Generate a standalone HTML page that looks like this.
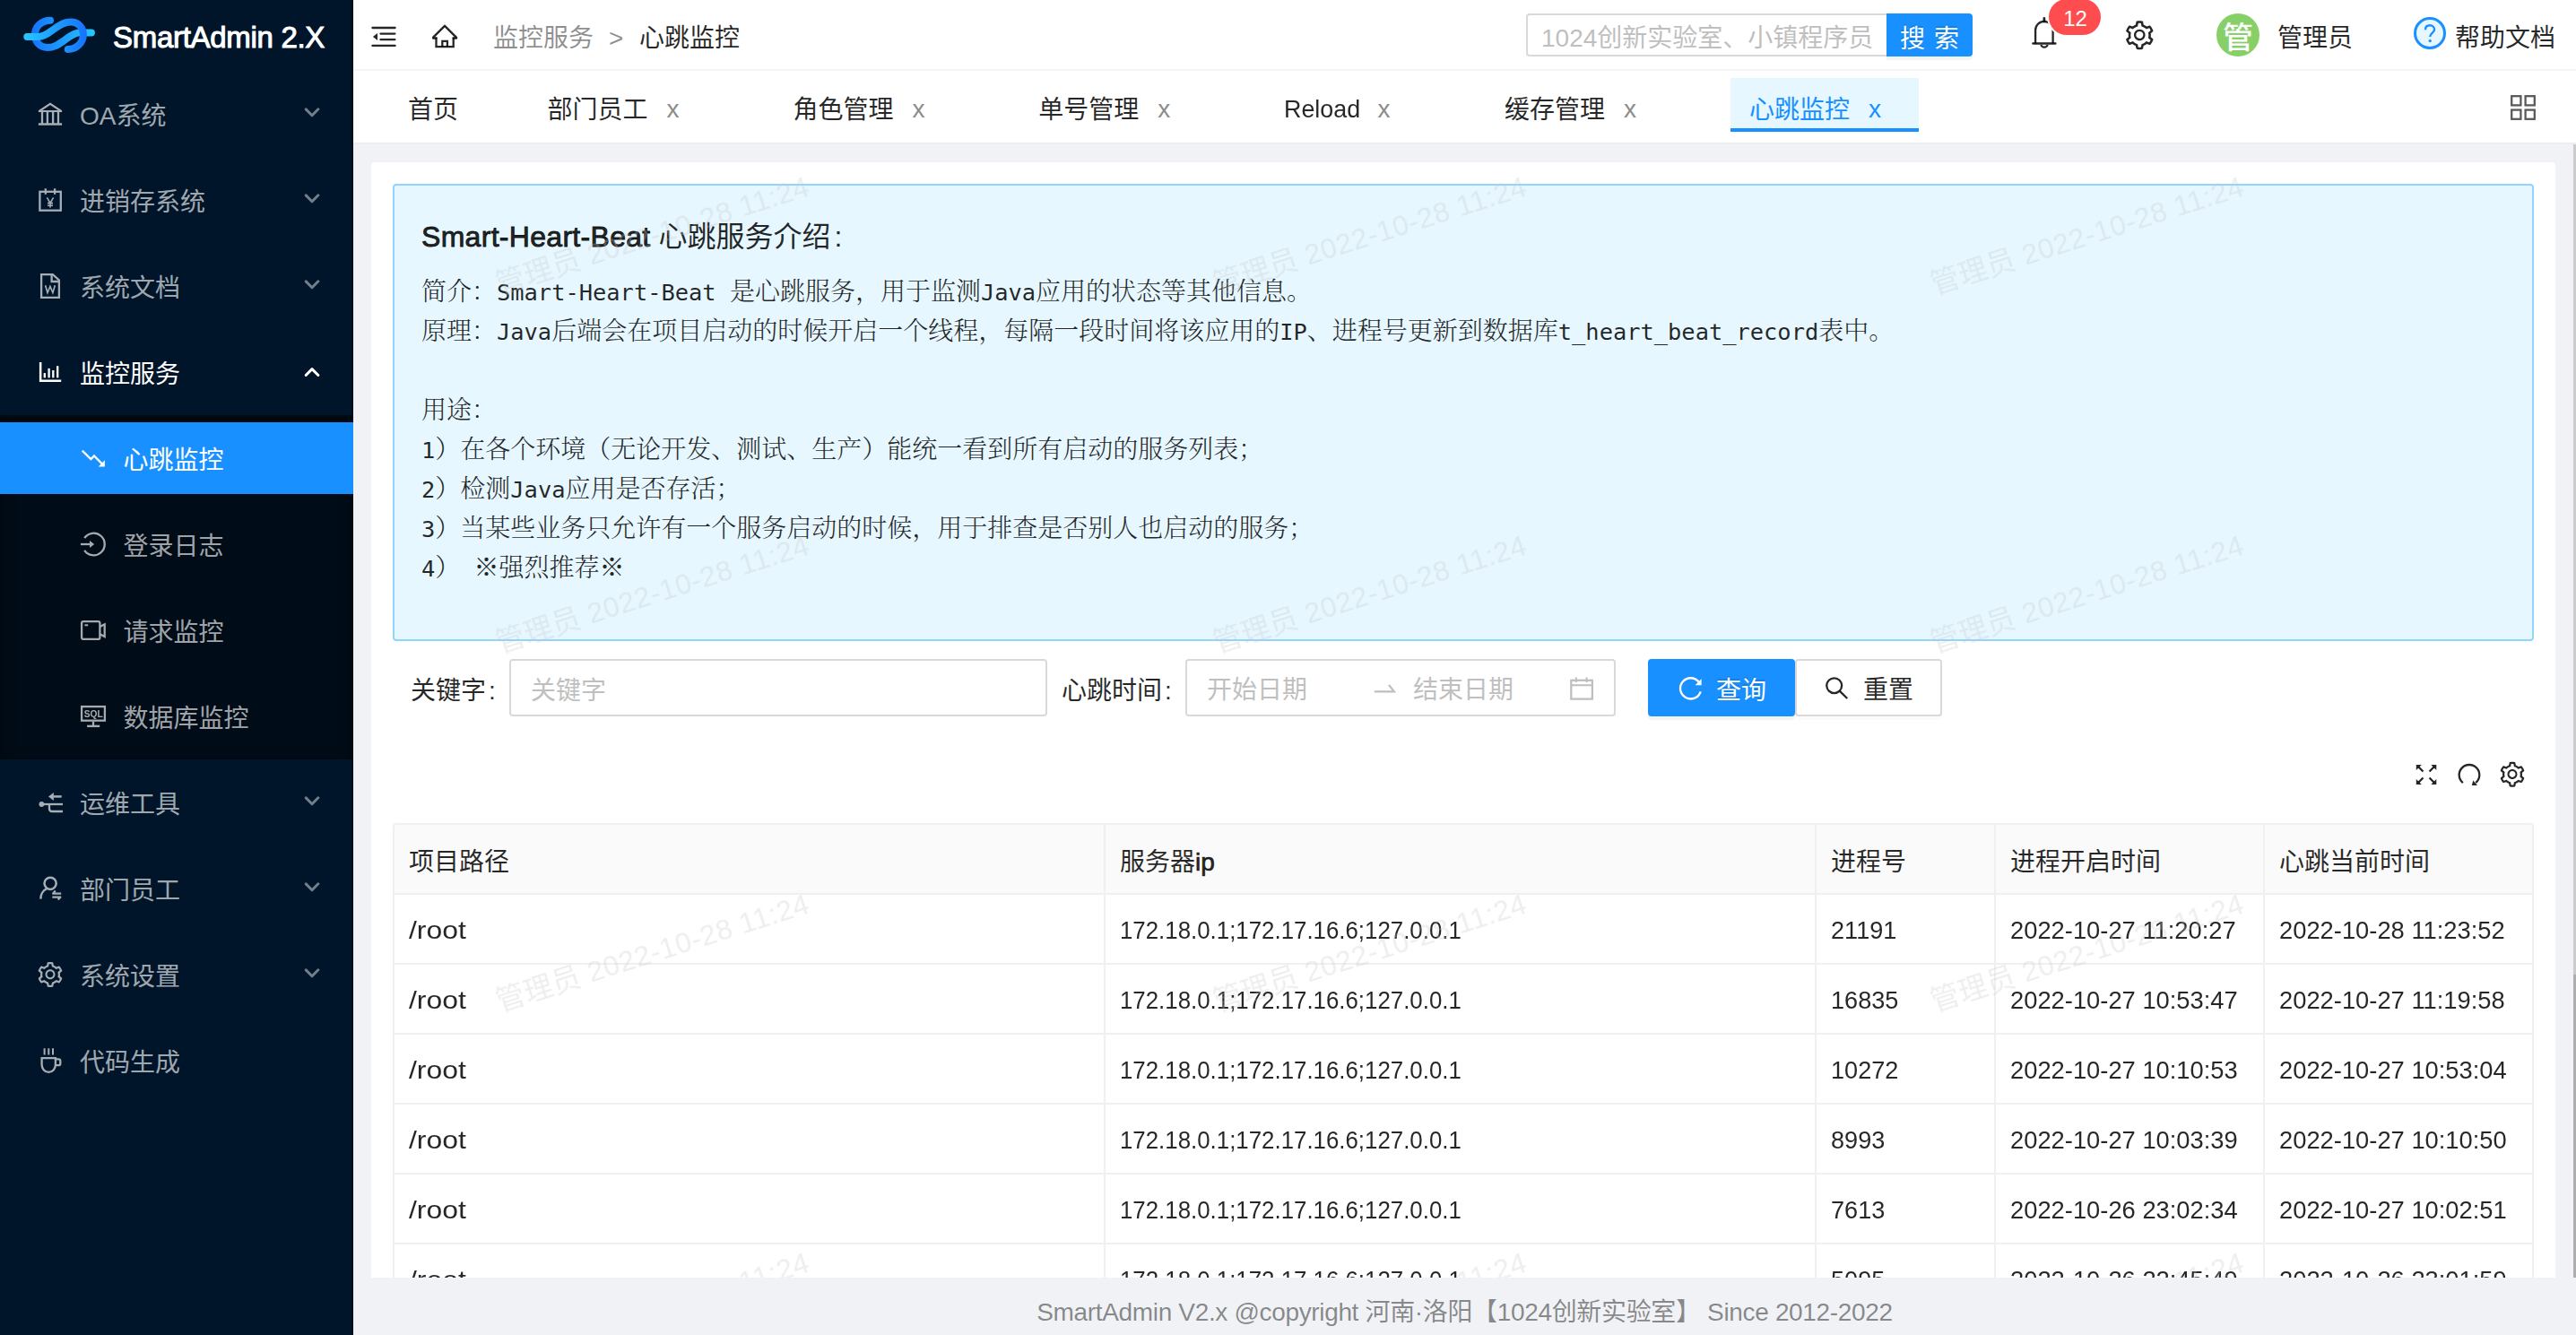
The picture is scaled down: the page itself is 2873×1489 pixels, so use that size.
<!DOCTYPE html>
<html lang="zh-CN">
<head>
<meta charset="utf-8">
<title>SmartAdmin 2.X</title>
<style>
html,body{margin:0;padding:0}
body{width:2873px;height:1489px;overflow:hidden;position:relative;background:#f0f2f5;font-family:"Liberation Sans","Noto Sans CJK SC",sans-serif;font-size:28px;color:rgba(0,0,0,.85);}
*{box-sizing:border-box}
.abs{position:absolute}
svg{display:block;overflow:visible}
/* ---------- sidebar ---------- */
#side{position:absolute;left:0;top:0;width:394px;height:1489px;background:#001529;overflow:hidden;box-shadow:inset -1.5px 0 0 #000b18}
#brand{position:absolute;left:126px;top:17px;height:50px;line-height:50px;font-size:33px;font-weight:400;-webkit-text-stroke:1px #fff;color:#fff;white-space:nowrap;letter-spacing:-.3px}
#subbg{position:absolute;left:0;top:463px;width:394px;height:384px;background:#000c17;box-shadow:inset 0 4px 16px rgba(0,0,0,.45)}
.mi{position:absolute;left:0;width:394px;height:80px;line-height:80px;color:rgba(255,255,255,.65);white-space:nowrap}
.mi .ic{position:absolute;left:42px;top:26px;width:28px;height:28px;color:#fff;opacity:.65}
.mi.on .ic,.mi.sel .ic{opacity:1}
.mi .tx{position:absolute;left:89px;top:3px}
.mi.sub .ic{left:90px}
.mi.sub .tx{left:137.500px}
.mi.on{color:#fff}
.mi.sel{background:#1890ff;color:#fff}
.mi .ar{position:absolute;left:334px;top:25px;width:28px;height:28px}
.st{fill:none;stroke:currentColor;stroke-width:2.3;stroke-linecap:butt;stroke-linejoin:miter}
/* ---------- header ---------- */
#head{position:absolute;left:394px;top:0;width:2479px;height:79px;background:#fff;border-bottom:2px solid #f5f5f5}
#tabs{position:absolute;left:394px;top:79px;width:2479px;height:82px;background:#fff;border-bottom:2px solid #ededed}
.tab{position:absolute;top:4px;height:80px;line-height:80px;white-space:nowrap}
.tab .x{color:#8c8c8c;top:-1px}
.bc{position:absolute;top:3.500px;height:78px;line-height:78px;white-space:nowrap}
/* ---------- main ---------- */
#card{position:absolute;left:414px;top:181px;width:2436px;height:1244px;background:#fff;border-radius:4px 4px 0 0;overflow:hidden}
#alert{position:absolute;left:24px;top:24px;width:2388px;height:510px;background:#e6f7ff;border:2px solid #91d5ff;border-radius:4px}
#alert h4{position:absolute;left:30px;top:32px;margin:0;font-size:32px;line-height:50px;font-weight:400;white-space:nowrap}
.sb{font-weight:400;-webkit-text-stroke:.9px currentColor}
#alert pre{position:absolute;left:30px;top:98.8px;margin:0;font-family:"Liberation Mono","Noto Serif CJK SC",monospace;font-weight:300;font-size:28px;line-height:44px;white-space:pre}
#alert pre span{font-family:"DejaVu Sans Mono","Liberation Mono",monospace;font-size:25.4px;line-height:0;font-weight:400}
.lbl{position:absolute;top:558px;height:64px;line-height:64px;white-space:nowrap}
.inp{position:absolute;top:554px;height:64px;border:2px solid #d9d9d9;border-radius:4px;background:#fff;line-height:60px;color:#bfbfbf;white-space:nowrap}
.btn{position:absolute;top:554px;height:64px;line-height:60px;border-radius:4px;white-space:nowrap}
/* table */
#tbl{position:absolute;left:24px;top:737px;width:2388px;border-left:2px solid #f0f0f0;border-top:2px solid #f0f0f0;border-radius:4px 4px 0 0}
.tr{position:relative;height:78px;width:2386px}
.tr>div{position:absolute;top:0;height:78px;border-right:2px solid #f0f0f0;border-bottom:2px solid #f0f0f0;padding-left:16px;padding-top:4px;line-height:72px;white-space:nowrap;overflow:hidden}
.th>div{background:#fafafa;padding-top:7px;line-height:69px}
.s{display:inline-block;transform-origin:0 50%}
.k1{transform:scaleX(1.14)}.k2{transform:scaleX(.923)}.k3{transform:scaleX(.968)}.k4{transform:scaleX(.976)}
.c1{left:0;width:793px}.c2{left:793px;width:793px}.c3{left:1586px;width:200px}.c4{left:1786px;width:300px}.c5{left:2086px;width:300px}
.wm{position:absolute;font-size:32px;line-height:32px;color:rgba(200,200,200,.3);white-space:nowrap;transform-origin:0 100%;transform:rotate(-17.700deg);letter-spacing:.47px;pointer-events:none;filter:blur(.5px)}
#foot{position:absolute;left:394px;top:1425px;width:2479px;height:64px;line-height:77px;text-align:center;color:rgba(0,0,0,.45);white-space:nowrap;letter-spacing:-.34px}
</style>
</head>
<body>
<svg width="0" height="0" style="position:absolute"><defs><path id="gear" fill="currentColor" d="M924.8 625.7l-65.5-56c3.1-19 4.7-38.400 4.7-57.800s-1.600-38.800-4.700-57.800l65.500-56a32.030 32.030 0 009.300-35.200l-.9-2.600a442.090 442.090 0 00-79.700-137.900l-1.800-2.100a32.120 32.120 0 00-35.100-9.500l-81.300 28.900c-30-24.600-63.500-44-99.700-57.600l-15.700-85a32.050 32.050 0 00-25.800-25.700l-2.700-.5c-52.100-9.400-106.900-9.400-159 0l-2.700.5a32.050 32.050 0 00-25.800 25.700l-15.800 85.400a351.860 351.860 0 00-99 57.400l-81.900-29.100a32 32 0 00-35.100 9.500l-1.800 2.100a446.020 446.020 0 00-79.700 137.900l-.9 2.600c-4.500 12.500-.8 26.500 9.300 35.200l66.300 56.600c-3.100 18.800-4.600 38-4.600 57.100 0 19.200 1.500 38.400 4.600 57.100L99 625.500a32.030 32.030 0 00-9.300 35.200l.9 2.600c18.100 50.400 44.900 96.900 79.700 137.900l1.800 2.100a32.120 32.120 0 0035.100 9.500l81.900-29.100c29.800 24.500 63.100 43.900 99 57.400l15.800 85.400a32.050 32.050 0 0025.800 25.700l2.700.5a449.400 449.400 0 00159 0l2.700-.5a32.050 32.050 0 0025.800-25.700l15.700-85a350 350 0 0099.700-57.600l81.300 28.900a32 32 0 0035.100-9.500l1.800-2.100c34.800-41.100 61.600-87.500 79.700-137.900l.9-2.600c4.500-12.300.8-26.300-9.300-35zM788.300 465.900c2.500 15.100 3.800 30.600 3.800 46.100s-1.300 31-3.800 46.100l-6.600 40.100 74.700 63.900a370.030 370.030 0 01-42.600 73.600L721 702.800l-31.400 25.800c-23.900 19.600-50.500 35-79.300 45.800l-38.100 14.300-17.900 97a377.500 377.500 0 01-85 0l-17.900-97.200-37.800-14.500c-28.500-10.800-55-26.200-78.700-45.700l-31.400-25.900-93.400 33.200c-17-22.900-31.200-47.600-42.600-73.600l75.500-64.500-6.500-40c-2.400-14.900-3.700-30.300-3.700-45.500 0-15.300 1.200-30.600 3.700-45.500l6.500-40-75.500-64.500c11.300-26.100 25.600-50.700 42.600-73.600l93.400 33.200 31.400-25.900c23.700-19.500 50.200-34.900 78.700-45.700l37.900-14.300 17.900-97.200c28.100-3.200 56.800-3.200 85 0l17.900 97 38.100 14.300c28.700 10.800 55.400 26.200 79.300 45.800l31.400 25.800 92.800-32.900c17 22.900 31.200 47.600 42.600 73.600L781.800 426l6.500 39.900zM512 326c-97.200 0-176 78.800-176 176s78.800 176 176 176 176-78.800 176-176-78.800-176-176-176zm79.200 255.200A111.600 111.600 0 01512 614c-29.900 0-58-11.700-79.200-32.800A111.600 111.600 0 01400 502c0-29.900 11.700-58 32.800-79.200C454 401.600 482.100 390 512 390c29.900 0 58 11.600 79.200 32.800A111.600 111.600 0 01624 502c0 29.900-11.700 58-32.800 79.200z"/></defs></svg>
<!-- SIDEBAR -->
<div id="side">
<svg class="abs" style="left:0;top:0" width="130" height="79" viewBox="0 0 130 79">
<defs>
<linearGradient id="lg1" gradientUnits="userSpaceOnUse" x1="28" y1="0" x2="96" y2="0"><stop offset="0" stop-color="#25c6ff"/><stop offset="1" stop-color="#1673ff"/></linearGradient>
<linearGradient id="lg2" gradientUnits="userSpaceOnUse" x1="36" y1="0" x2="104" y2="0"><stop offset="0" stop-color="#1673ff"/><stop offset="1" stop-color="#25c6ff"/></linearGradient>
</defs>
<path d="M101.9 36.6 L88.8 36.6 C81.8 36.6 76.8 41.6 70.9 45.6 C63.8 50.4 59.8 53 52.9 53 C44.3 53 38.9 46.6 38.9 38.8 C38.9 30.1 46.3 22.7 56 22.7" fill="none" stroke="url(#lg2)" stroke-width="8" stroke-linecap="round"/>
<path d="M30.3 41 L43 41 C50 41 55 36 60.9 32 C68 27.2 72 24.6 78.9 24.6 C87.5 24.6 92.9 31 92.9 38.8 C92.9 47.5 85.5 54.9 75.8 54.9" fill="none" stroke="url(#lg1)" stroke-width="8" stroke-linecap="round"/>
</svg>
<div id="brand">SmartAdmin 2.X</div>
<div id="subbg"></div>
<div class="mi" style="top:87px"><svg class="ic" viewBox="0 0 28 28"><clipPath id="cpb"><rect x="0.9" y="0" width="26.2" height="12.3"/></clipPath><g class="st" stroke-width="2.1"><g clip-path="url(#cpb)"><path d="M-2 13.36 L14 2.86 L30 13.36M0 11.2H28"/></g><path d="M5 11.5V24.6M10.9 11.5V24.6M17.1 11.5V24.6M23 11.5V24.6M0.9 25.5H27.1"/></g></svg><span class="tx">OA系统</span><svg class="ar" viewBox="0 0 28 28"><path d="M7.2 9.9 L14 16.8 L20.9 9.8" fill="none" stroke="rgba(255,255,255,.45)" stroke-width="3" stroke-linecap="round" stroke-linejoin="round"/></svg></div>
<div class="mi" style="top:183px"><svg class="ic" viewBox="0 0 28 28"><g class="st"><rect x="2.4" y="4.8" width="23.4" height="20.9"/><path d="M8.8 1.3V7.8M19.1 1.3V7.8"/><path d="M10.4 11.3 L14 17.4 L17.6 11.3 M14 17.4V22.6 M11 17.6H17 M11 20.2H17" stroke-width="1.6"/></g></svg><span class="tx">进销存系统</span><svg class="ar" viewBox="0 0 28 28"><path d="M7.2 9.9 L14 16.8 L20.9 9.8" fill="none" stroke="rgba(255,255,255,.45)" stroke-width="3" stroke-linecap="round" stroke-linejoin="round"/></svg></div>
<div class="mi" style="top:279px"><svg class="ic" viewBox="0 0 28 28"><g class="st"><path d="M4.1 1.1H16.8L23.9 7.4V26.9H4.1Z"/><path d="M15.6 1.1V9H23.9"/><path d="M8.6 13.3 L11 21.5 L13.95 14.5 L16.9 21.5 L19.3 13.3" stroke-width="1.7"/></g></svg><span class="tx">系统文档</span><svg class="ar" viewBox="0 0 28 28"><path d="M7.2 9.9 L14 16.8 L20.9 9.8" fill="none" stroke="rgba(255,255,255,.45)" stroke-width="3" stroke-linecap="round" stroke-linejoin="round"/></svg></div>
<div class="mi on" style="top:375px"><svg class="ic" viewBox="0 0 28 28"><g fill="currentColor"><path d="M1.9 3H4.4V22.5H26.2V25H1.9Z"/><rect x="6.65" y="15.1" width="2.3" height="5.2"/><rect x="11.45" y="9.9" width="2.3" height="10.4"/><rect x="16.15" y="12" width="2.3" height="8.3"/><rect x="21.05" y="7.2" width="2.3" height="13.1"/></g></svg><span class="tx">监控服务</span><svg class="ar" viewBox="0 0 28 28"><path d="M7.2 18.5 L14 11.6 L20.9 18.5" fill="none" stroke="#fff" stroke-width="3" stroke-linecap="round" stroke-linejoin="round"/></svg></div>
<div class="mi sub sel" style="top:471px"><svg class="ic" viewBox="0 0 28 28"><path class="st" d="M1.7 5.7 L11.4 15.1 L15 11.5 L24 20.5" stroke-width="2.7"/><path d="M26.9 16.2V23.4H19.7Z" fill="currentColor"/></svg><span class="tx">心跳监控</span></div>
<div class="mi sub" style="top:567px"><svg class="ic" viewBox="0 0 28 28"><path class="st" d="M4.2 7.2 A12.3 12.3 0 1 1 4.2 20.8"/><path class="st" d="M-0.1 14H11" stroke-width="2.2"/><path d="M10 10.1V18L15.2 14Z" fill="currentColor"/></svg><span class="tx">登录日志</span></div>
<div class="mi sub" style="top:663px"><svg class="ic" viewBox="0 0 28 28"><g class="st"><rect x="1.1" y="4.1" width="20.3" height="19.8" rx="2"/><path d="M21.4 10 L26.7 7.3 V21 L21.4 18.3"/><path d="M4.4 8.3H8.2" stroke-width="2"/></g></svg><span class="tx">请求监控</span></div>
<div class="mi sub" style="top:759px"><svg class="ic" viewBox="0 0 28 28"><g class="st"><rect x="1.1" y="3.1" width="25.8" height="15.6"/><path d="M14 19.8V24"/><path d="M7.1 24.9H21.2" stroke-width="2.4"/></g><text x="14.2" y="14.8" text-anchor="middle" font-family="Liberation Sans,sans-serif" font-size="10.2" font-weight="700" fill="currentColor">SQL</text></svg><span class="tx">数据库监控</span></div>
<div class="mi" style="top:855px"><svg class="ic" viewBox="0 0 28 28"><path d="M12 7.4 L17.9 3 V12Z" fill="currentColor"/><circle cx="4.4" cy="16" r="2.9" fill="currentColor"/><g class="st"><path d="M17.5 7.4H26.7" stroke-width="2.5"/><path d="M4.4 16H28"/><path d="M13 16V21Q13 24 16 24H28"/></g></svg><span class="tx">运维工具</span><svg class="ar" viewBox="0 0 28 28"><path d="M7.2 9.9 L14 16.8 L20.9 9.8" fill="none" stroke="rgba(255,255,255,.45)" stroke-width="3" stroke-linecap="round" stroke-linejoin="round"/></svg></div>
<div class="mi" style="top:951px"><svg class="ic" viewBox="0 0 28 28"><g class="st"><circle cx="14.1" cy="8.3" r="6.6" stroke-width="2.5"/><path d="M3.5 25.6 A11.5 11.5 0 0 1 10.3 14.2" stroke-width="2.5"/><path d="M16.3 19.6H26.2M16.6 19.9L19.8 16.6M16.3 23.6H26.2M25.9 23.3L22.7 26.6" stroke-width="2.2"/></g></svg><span class="tx">部门员工</span><svg class="ar" viewBox="0 0 28 28"><path d="M7.2 9.9 L14 16.8 L20.9 9.8" fill="none" stroke="rgba(255,255,255,.45)" stroke-width="3" stroke-linecap="round" stroke-linejoin="round"/></svg></div>
<div class="mi" style="top:1047px"><svg class="ic" style="left:40px;top:24px;width:32px;height:32px" viewBox="0 0 1024 1024"><use href="#gear"/></svg><span class="tx">系统设置</span><svg class="ar" viewBox="0 0 28 28"><path d="M7.2 9.9 L14 16.8 L20.9 9.8" fill="none" stroke="rgba(255,255,255,.45)" stroke-width="3" stroke-linecap="round" stroke-linejoin="round"/></svg></div>
<div class="mi" style="top:1143px"><svg class="ic" viewBox="0 0 28 28"><g class="st" stroke-width="2.1"><path d="M4.6 11.1H19.9V18.5A7.65 8.4 0 0 1 4.6 18.5Z"/><path d="M19.9 12.4H23.3Q25.3 12.4 25.3 14.4V17.2Q25.3 19.2 23.3 19.2H19.9"/><path d="M7.6 0.3V7.5M12.3 0.3V7.5M17 0.3V7.5" stroke-width="2"/></g></svg><span class="tx">代码生成</span></div>

</div>
<!-- HEADER -->
<div id="head">
<svg class="abs" style="left:0;top:1px;color:rgba(0,0,0,.85)" width="140" height="78" viewBox="394 0 140 78"><g class="st" stroke-width="2.2"><path d="M415.4 30H440.6M424.5 36.6H440.4M424.5 43.2H440.4M415.4 49.9H440.6" stroke-linecap="round"/><path d="M496 27.8 L483.4 40.4 M496 27.8 L508.6 40.4" stroke-linecap="round" stroke-width="2.4"/><path d="M486.5 40.6V51.1H505.7V40.6"/><path d="M483 41.6H486.5M505.7 41.6H509.2" stroke-linecap="round"/><path d="M493.3 51.1V44.9H498.9V51.1"/></g><path d="M415.9 40 L421 36 V44Z" fill="currentColor"/></svg>
<div class="bc" style="left:156px;color:rgba(0,0,0,.45)">监控服务</div>
<div class="bc" style="left:285px;color:rgba(0,0,0,.45)">&gt;</div>
<div class="bc" style="left:319px">心跳监控</div>
<div class="abs" style="left:1308px;top:15px;width:404px;height:48px;border:2px solid #d9d9d9;border-right:0;border-radius:4px 0 0 4px;line-height:51px;padding-left:15px;color:#bfbfbf;white-space:nowrap;overflow:hidden">1024创新实验室、小镇程序员</div>
<div class="abs" style="left:1710px;top:15px;width:96px;height:48px;background:#1890ff;border-radius:0 4px 4px 0;line-height:57px;color:#fff;text-align:center;white-space:nowrap;overflow:visible;word-spacing:2px;box-shadow:0 4px 0 rgba(0,0,0,.045);text-shadow:0 -2px 0 rgba(0,0,0,.12)">搜 索</div>
<svg class="abs" style="left:1860px;top:0;color:rgba(0,0,0,.85)" width="60" height="78" viewBox="2254 0 60 78"><g class="st" stroke-width="2.5"><path d="M2267.3 48.5H2292.5" stroke-linecap="round"/><path d="M2270.1 48.5V33.6A9.75 9.75 0 0 1 2289.6 33.600V48.5"/><path d="M2276.3 50A3.9 3.9 0 0 0 2283.700 50" stroke-width="2.2"/><path d="M2279.9 20.5V24" stroke-linecap="round" stroke-width="2.8"/></g></svg>
<div class="abs" style="left:1891px;top:-1px;width:58px;height:40px;border-radius:20px;background:#ff4d4f;box-shadow:0 0 0 2px #fff;color:#fff;font-size:24px;line-height:44px;text-align:center;text-indent:1px">12</div>
<svg class="abs" style="left:1973.7px;top:20.6px;color:rgba(0,0,0,.85)" width="36.6" height="36.6" viewBox="0 0 1024 1024"><use href="#gear"/></svg>
<div class="abs" style="left:2078px;top:15px;width:48px;height:48px;border-radius:24px;background:#87d068;color:#fff;font-size:34px;font-weight:500;line-height:54px;text-align:center">管</div>
<div class="bc" style="left:2146px">管理员</div>
<svg class="abs" style="left:2298px;top:19px" width="36" height="36" viewBox="0 0 36 36"><circle cx="18" cy="18" r="16.5" fill="#e6f7ff" stroke="#1890ff" stroke-width="3"/><path d="M13 14.200C13 11 15.200 9.300 18 9.300C20.800 9.300 23.100 11.100 23.100 13.900C23.100 17.400 18.200 17.800 18.200 22" fill="none" stroke="#1890ff" stroke-width="2.400"/><circle cx="18.200" cy="26.600" r="1.700" fill="#1890ff"/></svg>
<div class="bc" style="left:2344px">帮助文档</div>

</div>
<div id="tabs">
<div class="tab" style="left:61px">首页</div>
<div class="tab" style="left:216.500px">部门员工<span class="x abs" style="left:133px">x</span></div>
<div class="tab" style="left:490.600px">角色管理<span class="x abs" style="left:133px">x</span></div>
<div class="tab" style="left:764.200px">单号管理<span class="x abs" style="left:133px">x</span></div>
<div class="tab" style="left:1037.600px;top:3px"><span class="s" style="transform:scaleX(.96)">Reload</span><span class="x abs" style="left:105px;top:0">x</span></div>
<div class="abs" style="left:1536px;top:8px;width:210px;height:60px;background:#e6f7ff;border-bottom:4px solid #1890ff"></div>
<div class="tab" style="left:1284px">缓存管理<span class="x abs" style="left:133px">x</span></div>
<div class="tab" style="left:1557px;color:#1890ff">心跳监控<span class="x abs" style="left:133px;color:#1890ff">x</span></div>
<svg class="abs" style="left:2406px;top:27px;color:rgba(0,0,0,.65)" width="28" height="28" viewBox="0 0 28 28"><g class="st" stroke-width="2.4"><rect x="1.2" y="1.2" width="10.2" height="10.2"/><rect x="16.6" y="1.2" width="10.2" height="10.2"/><rect x="1.2" y="16.6" width="10.2" height="10.2"/><rect x="16.6" y="16.6" width="10.2" height="10.2"/></g></svg>

</div>
<!-- MAIN -->
<div id="card">
<div id="alert">
<h4><span class="sb" style="letter-spacing:.3px">Smart-Heart-Beat</span> 心跳服务介绍<span style="margin-left:4px">:</span></h4>
<pre>简介：<span>Smart-Heart-Beat </span>是心跳服务，用于监测<span>Java</span>应用的状态等其他信息。
原理：<span>Java</span>后端会在项目启动的时候开启一个线程，每隔一段时间将该应用的<span>IP</span>、进程号更新到数据库<span>t_heart_beat_record</span>表中。

用途：
<span>1</span>）在各个环境（无论开发、测试、生产）能统一看到所有启动的服务列表；
<span>2</span>）检测<span>Java</span>应用是否存活；
<span>3</span>）当某些业务只允许有一个服务启动的时候，用于排查是否别人也启动的服务；
<span>4</span>）<span> </span>※强烈推荐※</pre>
</div>
<div class="lbl" style="left:44px">关键字<span style="margin-left:3px">:</span></div>
<div class="inp" style="left:154px;width:600px;padding-left:22px;padding-top:4px">关键字</div>
<div class="lbl" style="left:770px">心跳时间<span style="margin-left:3px">:</span></div>
<div class="inp" style="left:908px;width:480px"><span class="abs" style="left:22px;top:3px">开始日期</span><span class="abs" style="left:252px;top:3px">结束日期</span>
<svg class="abs" style="left:208px;top:14px;color:#bfbfbf" width="28" height="28" viewBox="0 0 28 28"><path class="st" d="M0.800 20.300H22.800L17 12.900" stroke-width="2"/></svg>
<svg class="abs" style="left:427px;top:17px;color:#bfbfbf" width="28" height="28" viewBox="0 0 28 28"><g class="st" stroke-width="2.2"><rect x="1.300" y="4.800" width="23.600" height="20.800"/><path d="M1.300 10.300H24.900M6.800 1.600V7M18.600 1.600V7" stroke-width="2"/></g></svg>
</div>
<div class="btn" style="left:1424px;width:164px;background:#1890ff;color:#fff;line-height:64px;box-shadow:0 4px 0 rgba(0,0,0,.045);text-shadow:0 -2px 0 rgba(0,0,0,.12)"><svg class="abs" style="left:33.500px;top:19px" width="28" height="28" viewBox="0 0 28 28"><path class="st" d="M24.700 17.300A11.600 11.600 0 1 1 22.600 6.500" stroke-width="2.2"/><path d="M25.600 3.200V10.200H18.600Z" fill="currentColor"/></svg><span class="abs" style="left:76px;top:4px">查询</span></div>
<div class="btn" style="left:1588px;width:164px;background:#fff;border:2px solid #d9d9d9;box-shadow:0 4px 0 rgba(0,0,0,.015)"><svg class="abs" style="left:28.500px;top:15.300px" width="28" height="28" viewBox="0 0 28 28"><circle class="st" cx="12.700" cy="12.700" r="8.400" stroke-width="2.2"/><path class="st" d="M18.900 18.900L27.200 27" stroke-width="2.400"/></svg><span class="abs" style="left:74px;top:3px">重置</span></div>
<svg class="abs" style="left:2278px;top:669px;color:rgba(0,0,0,.85)" width="130" height="28" viewBox="2692 850 130 28">
<g class="st" stroke-width="2.3"><path d="M2702.500 860.500L2697.500 855.500M2709.500 860.500L2714.500 855.500M2702.500 867.500L2697.500 872.500M2709.500 867.500L2714.500 872.500"/></g>
<path d="M2694.800 852.900H2700.800L2694.800 858.900ZM2717.300 852.900V858.900L2711.300 852.900ZM2694.800 875.100V869.100L2700.800 875.100ZM2717.300 875.100H2711.300L2717.300 869.100Z" fill="currentColor"/>
<path class="st" d="M2746.900 873.100A11.300 11.300 0 1 1 2761.200 873" stroke-width="2.500"/><path d="M2758.300 870.600L2763 875.900H2756.800Z" fill="currentColor"/>
<svg x="2786" y="847.700" width="32" height="32" viewBox="0 0 1024 1024"><use href="#gear"/></svg>
</svg>
<div id="tbl">
<div class="tr th"><div class="c1">项目路径</div><div class="c2">服务器<span class="sb" style="-webkit-text-stroke-width:.7px">ip</span></div><div class="c3">进程号</div><div class="c4">进程开启时间</div><div class="c5">心跳当前时间</div></div>
<div class="tr"><div class="c1"><span class="s k1">/root</span></div><div class="c2"><span class="s k2">172.18.0.1;172.17.16.6;127.0.0.1</span></div><div class="c3"><span class="s k3">21191</span></div><div class="c4"><span class="s k4">2022-10-27 11:20:27</span></div><div class="c5"><span class="s k4">2022-10-28 11:23:52</span></div></div>
<div class="tr"><div class="c1"><span class="s k1">/root</span></div><div class="c2"><span class="s k2">172.18.0.1;172.17.16.6;127.0.0.1</span></div><div class="c3"><span class="s k3">16835</span></div><div class="c4"><span class="s k4">2022-10-27 10:53:47</span></div><div class="c5"><span class="s k4">2022-10-27 11:19:58</span></div></div>
<div class="tr"><div class="c1"><span class="s k1">/root</span></div><div class="c2"><span class="s k2">172.18.0.1;172.17.16.6;127.0.0.1</span></div><div class="c3"><span class="s k3">10272</span></div><div class="c4"><span class="s k4">2022-10-27 10:10:53</span></div><div class="c5"><span class="s k4">2022-10-27 10:53:04</span></div></div>
<div class="tr"><div class="c1"><span class="s k1">/root</span></div><div class="c2"><span class="s k2">172.18.0.1;172.17.16.6;127.0.0.1</span></div><div class="c3"><span class="s k3">8993</span></div><div class="c4"><span class="s k4">2022-10-27 10:03:39</span></div><div class="c5"><span class="s k4">2022-10-27 10:10:50</span></div></div>
<div class="tr"><div class="c1"><span class="s k1">/root</span></div><div class="c2"><span class="s k2">172.18.0.1;172.17.16.6;127.0.0.1</span></div><div class="c3"><span class="s k3">7613</span></div><div class="c4"><span class="s k4">2022-10-26 23:02:34</span></div><div class="c5"><span class="s k4">2022-10-27 10:02:51</span></div></div>
<div class="tr"><div class="c1"><span class="s k1">/root</span></div><div class="c2"><span class="s k2">172.18.0.1;172.17.16.6;127.0.0.1</span></div><div class="c3"><span class="s k3">5095</span></div><div class="c4"><span class="s k4">2022-10-26 22:45:49</span></div><div class="c5"><span class="s k4">2022-10-26 23:01:59</span></div></div>
</div>
<div class="wm" style="left:145.4px;top:120.4px">管理员 2022-10-28 11:24</div>
<div class="wm" style="left:945.4px;top:120.4px">管理员 2022-10-28 11:24</div>
<div class="wm" style="left:1745.4px;top:120.4px">管理员 2022-10-28 11:24</div>
<div class="wm" style="left:145.4px;top:520.4px">管理员 2022-10-28 11:24</div>
<div class="wm" style="left:945.4px;top:520.4px">管理员 2022-10-28 11:24</div>
<div class="wm" style="left:1745.4px;top:520.4px">管理员 2022-10-28 11:24</div>
<div class="wm" style="left:145.4px;top:920.4px">管理员 2022-10-28 11:24</div>
<div class="wm" style="left:945.4px;top:920.4px">管理员 2022-10-28 11:24</div>
<div class="wm" style="left:1745.4px;top:920.4px">管理员 2022-10-28 11:24</div>
<div class="wm" style="left:145.4px;top:1320.4px">管理员 2022-10-28 11:24</div>
<div class="wm" style="left:945.4px;top:1320.4px">管理员 2022-10-28 11:24</div>
<div class="wm" style="left:1745.4px;top:1320.4px">管理员 2022-10-28 11:24</div>


</div>
<div id="foot">SmartAdmin V2.x @copyright 河南·洛阳【1024创新实验室】 Since 2012-2022</div>
<div class="abs" style="left:2870px;top:161px;width:3px;height:926px;background:#cbcbcb"></div>
<div class="abs" style="left:2870px;top:1087px;width:3px;height:338px;background:#adadad"></div>
</body>
</html>
